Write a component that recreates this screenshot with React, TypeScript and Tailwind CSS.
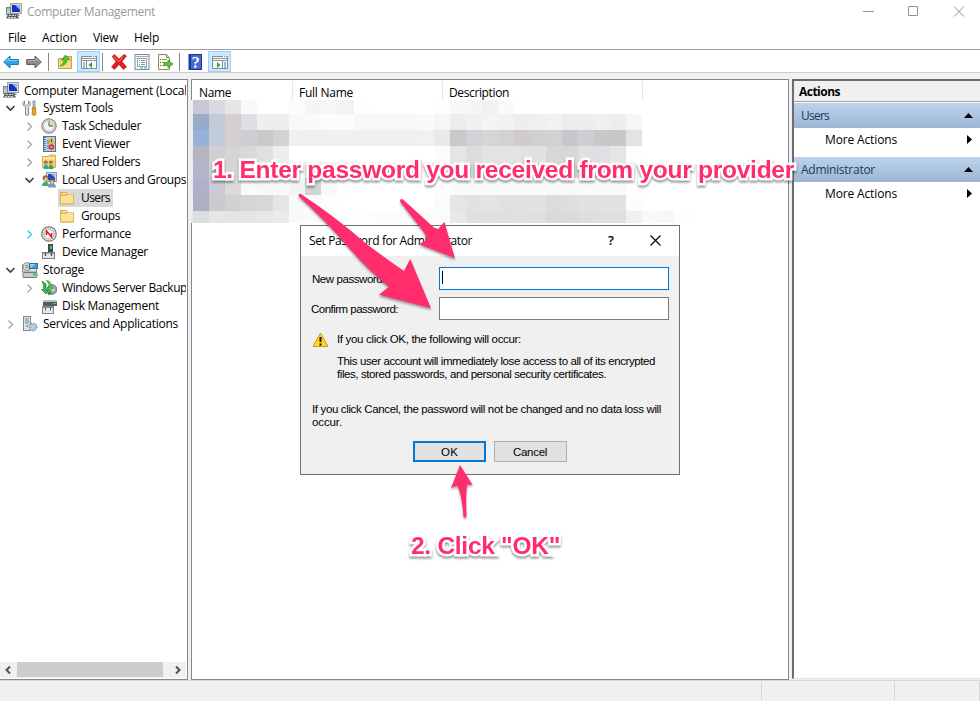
import { useLayoutEffect, useRef, type ReactNode } from "react";

const UI = "font-['Open_Sans','Noto_Sans',sans-serif]";
const DLG = "font-['Liberation_Sans',Arial,sans-serif]";

/* Single line of text whose tracking is adjusted to a given width. */
function Fit({ w, children, className = "" }: { w: number; children: string; className?: string }) {
  const ref = useRef<HTMLSpanElement>(null);
  useLayoutEffect(() => {
    const el = ref.current;
    if (!el) return;
    const apply = () => {
      el.style.letterSpacing = "0px";
      el.style.letterSpacing = `${(w - el.getBoundingClientRect().width) / children.length}px`;
    };
    apply();
    document.fonts.ready.then(apply);
  }, [w, children]);
  return (
    <span ref={ref} className={`inline-block shrink-0 whitespace-pre ${className}`}>
      {children}
    </span>
  );
}

function Svg({ children, className = "" }: { children: ReactNode; className?: string }) {
  return (
    <svg width="16" height="16" viewBox="0 0 16 16" className={`shrink-0 ${className}`}>
      {children}
    </svg>
  );
}

const ComputerIcon = () => (
  <Svg>
    <rect x="4.5" y=".5" width="11" height="10" fill="#d8d8d0" stroke="#a5a59b" />
    <rect x="6" y="2" width="8" height="7" fill="#1730c4" />
    <path d="M9 2h5v5Z" fill="#8fb4fa" />
    <path d="M7 11h6l1 2H7Z" fill="#a9aba8" />
    <rect x=".5" y="4.5" width="4" height="7" fill="#c3c9cf" stroke="#78838c" />
    <path d="M1 6h3" stroke="#60ce60" />
    <path d="M2 11h9l2 4.500H0Z" fill="#55626b" />
    <path d="M3 12.500h7M2 14.500h9" stroke="#d3dbe0" strokeDasharray="2 1" />
  </Svg>
);
const ToolsIcon = () => (
  <Svg>
    <path d="M2.500 1v3l2 2 2-2V1c3 2 2 5 0 6v8h-3V7C.500 6 0 2.500 2.500 1Z" fill="#e4e6e6" stroke="#80898c" />
    <path d="M11 1h2v7h-2Z" fill="#c6cccf" stroke="#7c8488" strokeWidth=".8" />
    <path d="M10 8h4l-.5 3 .5 3.500-2 1-2-1 .500-3.500Z" fill="#f0a81c" stroke="#bd7604" strokeWidth=".8" />
  </Svg>
);
const ClockIcon = () => (
  <Svg>
    <circle cx="8" cy="8" r="7.200" fill="#d5d5d3" stroke="#777" />
    <circle cx="8" cy="8" r="5.300" fill="#edf6fb" stroke="#a9aca9" strokeWidth=".6" />
    <path d="M8 8V2.700A5.300 5.300 0 0 1 13.300 8Z" fill="#f4dc9c" />
    <path d="M8 3.500V8h4" fill="none" stroke="#465a70" />
  </Svg>
);
const EventIcon = () => (
  <Svg>
    <rect x="2.500" y=".5" width="12" height="15" fill="#b6cbe9" stroke="#5f7187" />
    <path d="M3.500 1v14" stroke="#5d6d81" strokeWidth="2" strokeDasharray="1 1" />
    <path d="M6 10h2M6 12h2M6 5h2M6 7h2" stroke="#678" />
    <path d="m10.500 1.500 3 5.500h-6Z" fill="#ffd21e" stroke="#d09b00" strokeWidth=".6" />
    <path d="M10.500 3.500V6" stroke="#333" />
    <circle cx="10.500" cy="11" r="2.700" fill="#cf2b24" />
    <path d="m9.500 10 2 2m0-2-2 2" stroke="#fff" strokeWidth=".7" />
  </Svg>
);
const FolderIcon = () => (
  <Svg>
    <path d="M1.500 2.500h6l1 2h6v9.500h-13Z" fill="#ecc35b" stroke="#d8ae50" />
    <path d="M2 6h6l1-1.500h5v9H2Z" fill="#fbe39b" />
    <path d="M4 3.500h3" stroke="#fff3c8" />
    <path d="M14.500 4.500V14h-13" fill="none" stroke="#dfb75d" />
  </Svg>
);
const SharedIcon = () => (
  <Svg>
    <path d="M1.500 2.500h6l1-1.500h6v12.500h-13Z" fill="#f2cf6e" stroke="#d8ae50" />
    <path d="M2 4.500h12" stroke="#fff0b8" strokeWidth="1.500" />
    <circle cx="5" cy="8.500" r="1.700" fill="#5a4838" />
    <circle cx="10" cy="8.500" r="1.700" fill="#5a4838" />
    <circle cx="5.300" cy="9" r=".9" fill="#e9bb90" />
    <circle cx="10.300" cy="9" r=".9" fill="#e9bb90" />
    <path d="M2.500 15c0-6 5-6 5 0Z" fill="#27a4ac" />
    <path d="M7.500 15c0-6 5-6 5 0Z" fill="#39a65b" />
  </Svg>
);
const UsersIcon = () => (
  <Svg>
    <rect x="5.500" y=".5" width="10" height="9" fill="#d2d6db" stroke="#949ca6" />
    <rect x="7" y="2" width="7" height="6" fill="#2144cd" />
    <path d="M10 2h4v4Z" fill="#8db3f6" />
    <path d="M1 14c0-6 7-6 7 0Z" fill="#4aac6a" />
    <circle cx="4.500" cy="6" r="2.800" fill="#8d6748" />
    <circle cx="5" cy="7" r="1.700" fill="#edc196" />
    <path d="M7 15.500c0-6 8-6 8 0Z" fill="#7b99bd" />
    <circle cx="11" cy="9" r="2.700" fill="#76543c" />
    <circle cx="11" cy="10" r="1.700" fill="#f0ca9f" />
  </Svg>
);
const PerfIcon = () => (
  <Svg>
    <circle cx="8" cy="8" r="7.200" fill="#f7f7f5" stroke="#747474" strokeWidth="1.200" />
    <circle cx="8" cy="8" r="5" fill="none" stroke="#777" strokeWidth="1.200" strokeDasharray="1 1" />
    <path d="M5.500 9V5l5 6V7" stroke="#df1717" strokeWidth="1.500" fill="none" />
  </Svg>
);
const DeviceIcon = () => (
  <Svg>
    <path d="M7 0h5v9H7Z" fill="#44494b" />
    <path d="M9 2h2v3H9Z" fill="#35d85a" />
    <path d="M1 8h13v7H1Z" fill="#777d80" />
    <path d="M2 9.500h11V14H2Z" fill="#e4e6e6" />
    <path d="M4.500 9v3M10.500 9v3" stroke="#4b5053" strokeWidth="1.300" />
  </Svg>
);
const StorageIcon = () => (
  <Svg>
    <rect x=".5" y="3" width="14" height="7" fill="#e2e3e1" stroke="#858b8b" />
    <circle cx="5" cy="4.500" r="4" fill="#d7d9d8" stroke="#8b9293" />
    <circle cx="5" cy="4.500" r="1.200" fill="#fff" stroke="#777" />
    <rect x="7.500" y="1.500" width="8" height="5" fill="#3ca2d9" stroke="#30719b" />
    <path d="M8 2h5l-4 4Z" fill="#94d7f4" />
    <rect x="1" y="10.500" width="14" height="5" rx="1" fill="#c8cdcd" stroke="#717979" />
    <path d="M11 12.500h3" stroke="#29cd42" strokeWidth="2" />
  </Svg>
);
const BackupIcon = () => (
  <Svg>
    <circle cx="11" cy="9.500" r="4.800" fill="#a2a6a8" stroke="#6d7478" />
    <circle cx="12" cy="10" r="1.500" fill="#e8caca" />
    <path d="M1 1 5 4v6h2.500L5 14 .5 9.500H2.500V5Z" fill="#37bc4a" stroke="#198327" strokeWidth=".7" />
    <path d="M5.500.5c4 .5 5 3.500 4.500 7l1.500.5-3 3.500L6.500 7.500H8C8 4 7.500 2 5.500.5Z" fill="#62cf57" stroke="#198327" strokeWidth=".6" />
    <path d="m6 13 2 2.500 3-3-2-1Z" fill="#249d37" />
  </Svg>
);
const DiskIcon = () => (
  <Svg>
    <path d="M4 2h11l1 2v4H2V4Z" fill="#555d60" />
    <path d="M4 2h11l1 2H2Z" fill="#b7bcbc" />
    <path d="M12 5.500h3" stroke="#37dc58" />
    <path d="M1 8h12v8H1Z" fill="#838989" />
    <path d="M2 10h10v5H2Z" fill="#e8e9e9" />
    <path d="M4.500 10v2.500M9.500 10v2.500" stroke="#555" />
  </Svg>
);
const ServicesIcon = () => (
  <Svg>
    <rect x="1.500" y=".5" width="7" height="14" fill="#dce3e8" stroke="#7f8b93" />
    <path d="M3 3h4M3 5h4M3 7h4" stroke="#76838c" />
    <path d="M4 10h2" stroke="#42ba49" strokeWidth="1.500" />
    <circle cx="11" cy="11" r="3.500" fill="#cfe1ee" stroke="#7c9fba" strokeWidth="2" strokeDasharray="1.500 .8" />
    <circle cx="11" cy="11" r="1.300" fill="#fff" stroke="#7595ab" strokeWidth=".7" />
  </Svg>
);
const Arrow = ({ gray = false }: { gray?: boolean }) => (
  <Svg className={gray ? "-scale-x-100" : ""}>
    <path d="M.7 8 7 2v3.500h8.300v5H7V14Z" fill={gray ? "#8c8c8c" : "#2da5e4"} stroke={gray ? "#5e5e5e" : "#147bb3"} />
    <path d="M2.500 7.500 6 4.300v2.300h8" fill="none" stroke={gray ? "#b5b5b5" : "#8ad7fa"} />
  </Svg>
);
const UpFolderIcon = () => (
  <Svg>
    <path d="M1.500 4.500h6l1-2h6v12h-13Z" fill="#f2cb67" stroke="#c9a14b" />
    <path d="M2 7h12v7H2Z" fill="#f8d985" />
    <path d="M3 12c3-2 4-4 4-6H4.500L8.500 1l4 4.500H10c0 4-3 6-7 6.500Z" fill="#4fc733" stroke="#26921c" strokeWidth=".7" />
  </Svg>
);
const PanelIcon = ({ right = false }: { right?: boolean }) => (
  <Svg>
    <path d="M.5 2.500h15v12H.5Z" fill="#f7f8f8" stroke="#858b91" />
    <path d="M1 4.500h14M1 6.500h14" stroke="#8f959a" />
    <path d="M11 2.500h1M13 2.500h1" stroke="#fff" />
    {right ? (
      <>
        <path d="M10.500 7v7" stroke="#858b91" />
        <path d="m5 8 3.500 3L5 14Z" fill="#24a82e" />
        <path d="M12 9h2M12 11h2M12 13h2" stroke="#6f777f" />
      </>
    ) : (
      <>
        <path d="M5.500 7v7" stroke="#858b91" />
        <path d="m11 8-3.500 3 3.500 3Z" fill="#24a82e" />
        <path d="M2 9h2M2 11h2M2 13h2" stroke="#6f777f" />
      </>
    )}
  </Svg>
);
const DeleteIcon = () => (
  <Svg>
    <path d="M1 2.500 3.500.5 8 5l5-4.500L15.500 2 11 7.500l4.500 5.500-3 2.500-4.500-5-4.500 5L.5 13 5 7.500Z" fill="#df1f1f" stroke="#b81414" strokeWidth=".6" />
    <path d="m2.500 2.500 5.500 5 4.500-5" fill="none" stroke="#f77" />
  </Svg>
);
const PropsIcon = () => (
  <Svg>
    <rect x="1" y=".5" width="14" height="15" fill="#f7f8f8" stroke="#838b91" />
    <path d="M1 2.500h14" stroke="#a8afb4" />
    <rect x="3.500" y="4.500" width="9" height="8" fill="#fff" stroke="#98a3ac" />
    <path d="M5 6.500h1M5 8.500h1M5 10.500h1" stroke="#28a9e6" />
    <path d="M7 6.500h4M7 8.500h4M7 10.500h4" stroke="#8b969e" />
    <path d="M6 14h3M10 14h3" stroke="#28b9ec" />
  </Svg>
);
const ExportIcon = () => (
  <Svg>
    <path d="M1.500.5h8l3 3v12h-11Z" fill="#fffbdc" stroke="#858580" />
    <path d="M9.500.5v3h3" fill="#e5e0bd" stroke="#858580" />
    <path d="M3 5.500h1M3 8.500h1M3 11.500h1" stroke="#555" />
    <path d="M5 5.500h5M5 8.500h3M5 11.500h3" stroke="#8d98a1" />
    <path d="M7 8.500h4V6l5 4-5 4v-2.500H7Z" fill="#52c72f" stroke="#319820" strokeWidth=".7" />
  </Svg>
);
const HelpIcon = () => (
  <Svg className="-ml-px">
    <rect x="2" y=".5" width="12.500" height="15" fill="#4468cf" stroke="#183690" />
    <path d="M3 1v14" stroke="#1d3b96" strokeWidth="2" />
    <text x="8.800" y="13.500" textAnchor="middle" fontFamily="Liberation Serif, serif" fontWeight="bold" fontSize="16" fill="#fff">?</text>
  </Svg>
);

function Chevron({ open, tone = "#a6a6a6" }: { open?: boolean; tone?: string }) {
  return (
    <svg width="10" height="10" viewBox="0 0 10 10" className="shrink-0" fill="none" strokeWidth={open ? 1.6 : 1.4}>
      <path d={open ? "m.5 3 4 4 4-4" : "m2.500 1.500 4 4-4 4"} stroke={open ? "#404040" : tone} />
    </svg>
  );
}

type Row = { label: string; w: number; pad: string; icon: ReactNode; open?: boolean; leaf?: boolean; tone?: string; sel?: boolean };
const rows: Row[] = [
  { label: "Computer Management (Local", w: 163, pad: "pl-[3px]", icon: <ComputerIcon />, leaf: true },
  { label: "System Tools", w: 70, pad: "pl-[6px]", icon: <ToolsIcon />, open: true },
  { label: "Task Scheduler", w: 79, pad: "pl-[25px]", icon: <ClockIcon /> },
  { label: "Event Viewer", w: 68, pad: "pl-[25px]", icon: <EventIcon /> },
  { label: "Shared Folders", w: 78, pad: "pl-[25px]", icon: <SharedIcon /> },
  { label: "Local Users and Groups", w: 124, pad: "pl-[25px]", icon: <UsersIcon />, open: true },
  { label: "Users", w: 29, pad: "pl-[58px]", icon: <FolderIcon />, leaf: true, sel: true },
  { label: "Groups", w: 39, pad: "pl-[58px]", icon: <FolderIcon />, leaf: true },
  { label: "Performance", w: 69, pad: "pl-[25px]", icon: <PerfIcon />, tone: "#4bc1ed" },
  { label: "Device Manager", w: 86, pad: "pl-[41px]", icon: <DeviceIcon />, leaf: true },
  { label: "Storage", w: 41, pad: "pl-[6px]", icon: <StorageIcon />, open: true },
  { label: "Windows Server Backup", w: 125, pad: "pl-[25px]", icon: <BackupIcon /> },
  { label: "Disk Management", w: 97, pad: "pl-[41px]", icon: <DiskIcon />, leaf: true },
  { label: "Services and Applications", w: 135, pad: "pl-[6px]", icon: <ServicesIcon /> },
];

function Tree() {
  return (
    <div className="mr-px flex flex-1 flex-col overflow-hidden pt-px">
      {rows.map((r, i) => (
        <div key={r.label} className={`flex h-[18px] shrink-0 items-center ${r.pad}`}>
          {!r.leaf && (
            <span className={`flex shrink-0 ${r.pad === "pl-[6px]" ? "w-[16px]" : "w-[16px]"}`}>
              <Chevron open={r.open} tone={r.tone} />
            </span>
          )}
          <span className={`flex h-[18px] items-center gap-[5px] ${r.sel ? "bg-[#d9d9d9] pr-[3px]" : ""}`}>
            <span className={r.pad === "pl-[58px]" ? "pr-px pl-px" : ""}>{r.icon}</span>
            <Fit w={r.w} className={i === 0 ? "pt-px" : ""}>{r.label}</Fit>
          </span>
        </div>
      ))}
    </div>
  );
}

/* Pixelated account list: row height followed by one tone per block. */
const mosaic: { h: number; c: string[] }[] = [
  { h: 14, c: "c9c7d3 dad8e0 e6e6e6 f9f9f9 ffffff ffffff fcfcfc f5f5f5 f6f6f6 f3f3f3 fefefe ffffff ffffff ffffff ffffff fefefe f7f7f7 f5f5f5 f1f1f1 fafafa".split(" ") },
  { h: 16, c: "9aabc8 c3cad8 d5d0d0 dfdfe3 eeeeee eeeeee f9f9f9 fafafa fcfcfc fcfcfc f8f8f8 f8f8f8 f8f8f8 f8f8f8 f9fbfb f6f6f6 eeebed f0f0f0 f4f4f4 f2f2f2 eeeeee efefef f2f2f2 ececec ededed f0f0f0 ededed f6f6f6".split(" ") },
  { h: 16, c: "95b2da c1ccd8 d5d0d0 d0ced2 c9c9c9 d3d3d5 f0f0f0 f0f0f0 f0f0f0 f0f0f0 f0f0f0 f0f0f0 f0f0f0 f0f0f0 f1f1f1 e9e9e9 cac8ca d3d1d6 d5d5d7 d2d2d2 d0ccce d0d0d0 d2d2d2 c8c7cb cfced3 c8c8c8 c8c8c8 e3e3e3".split(" ") },
  { h: 16, c: "b8b4bf d2cfd3 d7d4d7 dbd8da e0e0e0 eeeeee ffffff ffffff ffffff ffffff ffffff ffffff ffffff ffffff ffffff fcfcfa e5e5e5 dddddd e3e3e3 e4e4e4 e3e3e3 e2e2e2 d7d7d7 d7d7d7 e0e0e0 e0dfe3 e6e6e6 fdfdfd".split(" ") },
  { h: 16, c: "b2b5c7 cecfd9 d6d5d8 dddddf e8e8e8 ededed f8f8f8 eeeeee f4f4f4 f8f8f8 f8f8f8 f8f8f8 f8f8f8 f8f8f8 f9f9f9 fafafa dededf d5d5d7 dfdfdf dddddd dddddd dcdcdc d4d4d4 d3d3d3 dcdcdc dddddd dfdfdf f5f5f5".split(" ") },
  { h: 17, c: "afb0c9 cbcad9 dbdbdd f8faf9 f8f8f8 f8f8f8 f3f3f3 d4d4d4 f8f8f8 fefefe ffffff ffffff ffffff ffffff ffffff fdfdfd fafafa fafafa fafafa f9f9f9 f9f9f9 f9f9f9 f9f9f9 f9f9f9 fafafa fafafa fafafa fefefe".split(" ") },
  { h: 16, c: "adb0c1 cacace d1d1d1 d5d5d5 d8d7da e5e5e5 fafafa fcfcfc fdfdfd ffffff ffffff ffffff ffffff ffffff ffffff fbfbf9 e5e5e5 e2e2e2 e4e4e4 e1e1e1 e2e2e2 e2e2e2 dcdcdc dedede e1e1e1 e2e2e2 e2e2e2 fcfcfc".split(" ") },
  { h: 12, c: "dcdde1 e6e6e6 e4e4e4 e5e5e5 e8e8e8 ebebeb f9f9f9 fafafa fbfbfb fdfdfd fdfdfd fcfcfc fcfcfc fbfbfb fcfcfc fbfbf9 e8e8e8 dfdfdf e0e0e0 dfdfdf e0e0e0 dfdfdf dadada dbdbdb dedede dfdfdf dfdfdf f0f0f0 f9f9f9 f7f7f7 fdfdfd".split(" ") },
];

function Mosaic() {
  return (
    <div className="-ml-px flex flex-col bg-white">
      {mosaic.map((row, i) => (
        <div key={i} className="flex">
          <span className={i % 2 ? "w-[2px] bg-[#e8e8e8]" : "w-[2px] bg-[#f0f0f0]"} />
          {row.c.map((c, k) => (
            <span key={k} className={k === 9 ? "w-[17px] shrink-0" : "w-4 shrink-0"} style={{ height: row.h, backgroundColor: `#${c}` }} />
          ))}
        </div>
      ))}
    </div>
  );
}

function ActionGroup({ title, w }: { title: string; w: number }) {
  return (
    <>
      <div className="flex h-[25px] items-center justify-between bg-gradient-to-b from-[#bcd3eb] to-[#9bb5d4] pr-[7px] pl-[7px] text-[#1e395b]">
        <Fit w={w} className="pt-px">{title}</Fit>
        <svg width="9" height="5" viewBox="0 0 9 5"><path d="M4.500 0 9 5H0Z" /></svg>
      </div>
      <div className="flex h-[29px] items-center justify-between pr-[7px] pb-[5px] pl-[31px]">
        <Fit w={72}>More Actions</Fit>
        <svg width="6" height="9" viewBox="0 0 6 9" className="mb-px"><path d="M0 0v9l5-4.500Z" /></svg>
      </div>
    </>
  );
}

function Dialog() {
  return (
    <div className={`absolute top-[225px] left-[300px] flex h-[250px] w-[380px] flex-col border border-[#707070] bg-[#f0f0f0] text-[11.5px] leading-[13px] text-black ${DLG}`}>
      <div className={`flex h-[30px] shrink-0 items-center bg-white pb-px pl-2 text-[12px] ${UI}`}>
        <Fit w={163}>Set Password for Administrator</Fit>
        <span className="ml-[136px] text-[13px] font-semibold">?</span>
        <svg width="11" height="11" viewBox="0 0 11 11" className="mr-[18px] ml-auto"><path d="m.5.5 10 10m0-10-10 10" stroke="#000" strokeWidth="1.100" /></svg>
      </div>
      <div className="mt-[11px] flex h-[23px] shrink-0 items-center justify-between pr-[10px] pl-[11px]">
        <Fit w={73} className="mt-[2px]">New password:</Fit>
        <span className="flex h-[23px] w-[230px] items-start border border-[#0078d7] bg-white pt-[3px] pl-[2px]"><span className="h-[13px] w-px bg-black" /></span>
      </div>
      <div className="mt-[7px] flex h-[23px] shrink-0 items-center justify-between pr-[10px] pl-[10px]">
        <Fit w={87} className="mt-[2px]">Confirm password:</Fit>
        <span className="h-[23px] w-[230px] border border-[#7a7a7a] bg-white" />
      </div>
      <div className="mt-[13px] flex shrink-0 pl-[11px]">
        <svg width="17" height="16" viewBox="0 0 17 16" className="-mt-px shrink-0">
          <path d="M8.500 1 16 14.500H1Z" fill="#fdd923" stroke="#c99b13" strokeLinejoin="round" />
          <path d="M8.500 5v5M8.500 11.500v2" stroke="#111" strokeWidth="2" />
        </svg>
        <div className="flex flex-col items-start pl-2">
          <Fit w={184}>If you click OK, the following will occur:</Fit>
          <Fit w={318} className="mt-[9px]">This user account will immediately lose access to all of its encrypted</Fit>
          <Fit w={269}>files, stored passwords, and personal security certificates.</Fit>
        </div>
      </div>
      <div className="mt-[22px] flex shrink-0 flex-col items-start pl-[11px]">
        <Fit w={349}>If you click Cancel, the password will not be changed and no data loss will</Fit>
        <Fit w={30}>occur.</Fit>
      </div>
      <div className="mt-[12px] flex shrink-0 gap-2 pl-[112px]">
        <div className="flex h-[21px] w-[73px] items-center justify-center border-2 border-[#0078d7] bg-[#e1e1e1] pt-px"><Fit w={17}>OK</Fit></div>
        <div className="flex h-[21px] w-[73px] items-center justify-center border border-[#adadad] bg-[#e1e1e1] pt-px pr-px"><Fit w={34}>Cancel</Fit></div>
      </div>
    </div>
  );
}

const NOTE = "absolute font-['Liberation_Sans',Arial,sans-serif] text-[24.5px] leading-[28px] font-bold text-[#ff2d6c] [-webkit-text-stroke:5px_white] [paint-order:stroke_fill] [stroke-linejoin:round] drop-shadow-[0_2px_1px_rgba(0,0,0,0.4)]";

export default function App() {
  return (
    <div className={`relative flex h-[701px] w-[980px] flex-col overflow-hidden bg-[#f0f0f0] text-[12px] leading-[18px] text-black ${UI}`}>
      <div className="flex h-[25px] shrink-0 items-start bg-white pt-[3px] pl-[6px] text-[#999]">
        <ComputerIcon />
        <Fit w={128} className="ml-[5px]">Computer Management</Fit>
        <svg width="102" height="12" viewBox="0 0 102 12" className="mt-[3px] mr-[15px] ml-auto" fill="none" stroke="#929292">
          <path d="M0 5.500h11M45.500.5h9v9h-9ZM91 .5l10 10m0-10-10 10" />
        </svg>
      </div>
      <div className="flex h-[24px] shrink-0 items-center bg-white pt-[2px] pl-2">
        <Fit w={18}>File</Fit>
        <Fit w={35} className="ml-4">Action</Fit>
        <Fit w={25} className="ml-4">View</Fit>
        <Fit w={25} className="ml-4">Help</Fit>
      </div>
      <div className="flex h-[24px] shrink-0 items-center border-t border-b border-t-[#a0a0a0] border-b-[#d0d0d0] bg-white pt-px pl-[3px]">
        <Arrow />
        <span className="ml-[7px] flex"><Arrow gray /></span>
        <span className="ml-[6px] h-[18px] w-px bg-[#888]" />
        <span className="ml-[8px] flex"><UpFolderIcon /></span>
        <span className="ml-[4px] flex h-[21px] w-[23px] items-center justify-center border border-[#99d1ff] bg-[#cce8ff]"><PanelIcon /></span>
        <span className="ml-[2px] h-[18px] w-px bg-[#888]" />
        <span className="ml-[8px] flex gap-[7px]"><DeleteIcon /><PropsIcon /><ExportIcon /></span>
        <span className="ml-[6px] h-[18px] w-px bg-[#888]" />
        <span className="ml-[8px] flex"><HelpIcon /></span>
        <span className="ml-[5px] flex h-[21px] w-[23px] items-center justify-center border border-[#99d1ff] bg-[#cce8ff]"><PanelIcon right /></span>
      </div>
      <div className="flex h-[607px] shrink-0 pt-[6px]">
        <div className="flex w-[188px] shrink-0 flex-col border-t border-r border-b border-[#828790] bg-white">
          <Tree />
          <div className="mr-px mb-px flex h-[16px] shrink-0 items-center bg-[#f0f0f0] pr-[5px] pl-[5px]">
            <svg width="6" height="8" viewBox="0 0 6 8" fill="none" stroke="#505050" strokeWidth="2"><path d="M5 .5 1.500 4 5 7.500" /></svg>
            <span className="ml-[6px] h-[15px] w-[146px] self-start bg-[#cdcdcd]" />
            <svg width="6" height="8" viewBox="0 0 6 8" fill="none" stroke="#505050" strokeWidth="2" className="ml-auto"><path d="M1 .5 4.500 4 1 7.500" /></svg>
          </div>
        </div>
        <div className="ml-[3px] flex w-[598px] shrink-0 flex-col border border-[#828790] bg-white">
          <div className="flex h-[20px] shrink-0 items-start pt-px">
            <div className="flex h-[19px] w-[101px] border-r border-[#e5e5e5] pt-[3px] pl-[7px]"><Fit w={32}>Name</Fit></div>
            <div className="flex h-[19px] w-[150px] border-r border-[#e5e5e5] pt-[3px] pl-[6px]"><Fit w={54}>Full Name</Fit></div>
            <div className="flex h-[19px] w-[200px] border-r border-[#e5e5e5] pt-[3px] pl-[6px]"><Fit w={60}>Description</Fit></div>
          </div>
          <Mosaic />
        </div>
        <div className="ml-[3px] flex h-[600px] flex-1 flex-col border-t-2 border-b border-l-2 border-t-[#6d6d6d] border-b-[#e3e3e3] border-l-[#6d6d6d] bg-white">
          <div className="mb-px flex h-[21px] shrink-0 items-center border-b border-[#a0a0a0] bg-[#f0f0f0] pt-[2px] pl-[5px] font-bold"><Fit w={41}>Actions</Fit></div>
          <ActionGroup title="Users" w={28} />
          <ActionGroup title="Administrator" w={74} />
        </div>
      </div>
      <div className="flex h-[21px] shrink-0 border-t border-[#d7d7d7] pt-px">
        <span className="w-[762px] border-r border-[#d7d7d7]" />
        <span className="w-[133px] border-r border-[#d7d7d7]" />
        <span className="w-[85px] border-r border-[#d7d7d7]" />
      </div>

      <Dialog />
      <svg width="980" height="701" viewBox="0 0 980 701" className="absolute inset-0 drop-shadow-[0_2px_1px_rgba(0,0,0,0.35)]" fill="#ff2d6c">
        <path d="M301 194Q337 218 366 243.500 385 258 404 271L410.300 259 431 308.300 379 294.700 388.700 286.700Q370 272 348 247 325 220 299 196.500 298 193 301 194Z" />
        <path d="M403 199.500 431.700 225.500Q435 229 438.300 229L444.300 221.700 455 258.300 419 244.300 427 239.500Q426 235 423 231L400 201.500Q400 198 403 199.500Z" />
        <path d="M460 465 472.700 485 467.300 484.500Q465.500 491 466.500 516 465 519 463.500 516.500 462 495 457.300 485.500L451 488Z" />
      </svg>
      <div className={`${NOTE} top-[156px] left-[213px]`}><Fit w={581}>1. Enter password you received from your provider</Fit></div>
      <div className={`${NOTE} top-[532px] left-[411px]`}><Fit w={149}>2. Click "OK"</Fit></div>
    </div>
  );
}
